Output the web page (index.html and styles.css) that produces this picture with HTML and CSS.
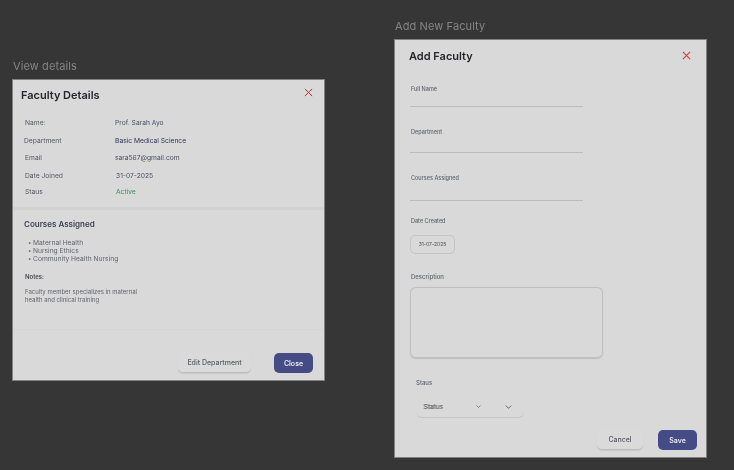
FILE: index.html
```html
<!DOCTYPE html>
<html lang="en">
<head>
<meta charset="utf-8">
<title>Faculty</title>
<link rel="stylesheet" href="styles.css">
</head>
<body>
<section class="frame frame-view">
  <h2 class="frame-label">View details</h2>
  <div class="card card-view">
    <header class="card-head head-view">
      <h1 class="card-title">Faculty Details</h1>
      <svg class="close close-view" viewBox="0 0 10 10"><path d="M1 1l8 8M9 1l-8 8"/></svg>
    </header>
    <div class="details">
      <div class="row row-1"><span class="key">Name:</span><span class="val">Prof. Sarah Ayo</span></div>
      <div class="row row-2"><span class="key key-out">Department</span><span class="val val-strong">Basic Medical Science</span></div>
      <div class="row row-3"><span class="key">Email</span><span class="val">sara567@gmail.com</span></div>
      <div class="row row-4"><span class="key">Date Joined</span><span class="val val-in">31-07-2025</span></div>
      <div class="row row-5"><span class="key">Staus</span><span class="val val-in val-active">Active</span></div>
    </div>
    <div class="courses">
      <h3 class="courses-title">Courses Assigned</h3>
      <ul class="course-list">
        <li>Maternal Health</li>
        <li>Nursing Ethics</li>
        <li>Community Health Nursing</li>
      </ul>
      <h4 class="notes-title">Notes:</h4>
      <p class="notes">Faculty member specializes in maternal<br>health and clinical training</p>
    </div>
    <footer class="actions actions-view">
      <button class="btn btn-light btn-edit">Edit Department</button>
      <button class="btn btn-primary btn-close">Close</button>
    </footer>
  </div>
</section>

<section class="frame frame-add">
  <h2 class="frame-label">Add New Faculty</h2>
  <div class="card card-add">
    <header class="card-head head-add">
      <h1 class="card-title">Add Faculty</h1>
      <svg class="close close-add" viewBox="0 0 10 10"><path d="M1 1l8 8M9 1l-8 8"/></svg>
    </header>
    <div class="field field-name"><label class="field-label">Full Name</label><div class="line line-name"></div></div>
    <div class="field field-dept"><label class="field-label">Department</label><div class="line line-dept"></div></div>
    <div class="field field-courses"><label class="field-label">Courses Assigned</label><div class="line line-courses"></div></div>
    <div class="field field-date"><label class="field-label">Date Created</label><div class="date-box">31-07-2025</div></div>
    <div class="field field-desc"><label class="field-label label-desc">Description</label><div class="textarea"></div></div>
    <div class="status">
      <label class="field-label status-label">Staus</label>
      <div class="select">
        <span class="select-text">Status<span class="select-ghost">Status</span></span>
        <svg class="chev chev-small" viewBox="0 0 10 6"><path d="M1 1l4 4 4-4"/></svg>
        <svg class="chev chev-large" viewBox="0 0 10 6"><path d="M1 1l4 4 4-4"/></svg>
      </div>
    </div>
    <footer class="actions actions-add">
      <button class="btn btn-light btn-cancel">Cancel</button>
      <button class="btn btn-primary btn-save">Save</button>
    </footer>
  </div>
</section>
</body>
</html>
```

FILE: styles.css
```css
* { box-sizing: border-box; margin: 0; padding: 0; }
html, body { width: 734px; height: 470px; overflow: hidden; }
body { background: #363636; font-family: Inter, "Noto Sans", sans-serif; color: #2a2d3a; position: relative; }

.frame { position: absolute; width: 313px; filter: blur(0.3px); }
.frame-view { left: 12px; top: 59px; }
.frame-add { left: 394px; top: 19px; }
.frame-label { font-size: 11px; line-height: 15px; font-weight: 400; color: #858585; height: 20px; padding-left: 1px; letter-spacing: 0.1px; }

.card { background: #d9d9d9; border: 1px solid #828282; display: flex; flex-direction: column; }
.card-view { height: 302px; }
.card-add { height: 419px; }

.card-head { display: flex; justify-content: space-between; align-items: flex-start; }
.head-view { padding: 8px 11px 0 8px; height: 30px; }
.head-add { padding: 9px 15px 0 14px; height: 39px; }
.card-title { font-size: 11px; line-height: 14px; font-weight: 600; color: #26262b; }
.close { fill: none; stroke: #d6242a; stroke-width: 1.1; }
.close-view { width: 9px; height: 9px; margin-top: 0; }
.close-add { width: 9px; height: 9px; stroke: #cf4444; stroke-width: 1.3; margin-top: 2px; }

.details { padding: 8px 0 0 11px; height: 100px; display: flex; flex-direction: column; border-bottom: 3px solid #d2d2d2; flex: none; }
.row { display: grid; grid-template-columns: 91px 1fr; font-size: 6.7px; line-height: 10px; color: #4a4d62; }
.row-2, .row-3, .row-4 { margin-top: 7.5px; }
.row-5 { margin-top: 6px; }
.key { color: #55575f; }
.row-1 .key, .row-3 .key, .row-4 .key, .row-5 .key { padding-left: 1px; }
.val-strong { color: #2f3356; }
.val-in { padding-left: 1px; }
.val-active { color: #3c8a5e; }

.courses { padding: 9px 0 0 11px; height: 120px; border-bottom: 1px solid #d5d5d5; flex: none; }
.courses-title { font-size: 8px; line-height: 11px; font-weight: 600; color: #3f4251; }
.course-list { list-style: none; margin-top: 9px; padding-left: 4px; font-size: 6.7px; line-height: 8px; color: #62646f; }
.course-list li::before { content: "•"; display: inline-block; width: 5px; font-size: 6px; }
.notes-title { margin-top: 10px; padding-left: 1px; font-size: 6px; line-height: 8px; font-weight: 600; color: #45474f; }
.notes { margin-top: 7px; padding-left: 1px; font-size: 6px; line-height: 7.5px; color: #62646f; }

.actions { display: flex; align-items: center; justify-content: flex-end; }
.actions-view { padding: 23px 11px 0 0; gap: 23px; }
.actions-add { padding: 12px 9px 0 0; gap: 15px; }
.btn { font-family: inherit; font-size: 7px; font-weight: 500; border: 0; border-radius: 5px; height: 20px; }
.btn-light { background: #dadada; color: #5a5c66; border-bottom: 1px solid #bdbdbd; box-shadow: 0 1px 1px #c8c8c8; }
.btn-primary { background: #454b85; color: #e8e8ef; font-weight: 600; }
.btn-edit { width: 73px; }
.btn-close { width: 39px; }
.btn-cancel { width: 46px; }
.btn-save { width: 39px; }

.field { padding-left: 15px; flex: none; }
.field-label { display: block; font-size: 5.5px; line-height: 8px; font-weight: 500; color: #60636f; padding-left: 1px; }
.line { height: 1px; background: #bcbcbc; width: 173px; }
.field-name { margin-top: 6px; }
.line-name { margin-top: 13px; }
.field-dept { margin-top: 21px; }
.line-dept { margin-top: 16px; }
.field-courses { margin-top: 21px; }
.line-courses { margin-top: 18px; }
.field-date { margin-top: 16px; }
.date-box { margin-top: 10px; width: 45px; height: 19px; border: 1px solid #c4c4c4; border-radius: 5px; font-size: 5px; line-height: 17px; text-align: center; color: #4b4d58; }
.field-desc { margin-top: 18px; }
.label-desc { font-size: 6px; padding-top: 1px; }
.textarea { margin-top: 6px; width: 193px; height: 72px; border: 1px solid #c0c0c0; border-bottom-width: 2px; border-radius: 6px; box-shadow: 0 0 1px #bdbdbd; }

.status { padding-left: 21px; margin-top: 20px; flex: none; }
.status-label { padding-left: 0; font-size: 6px; }
.select { margin-top: 9px; width: 108px; height: 22px; border-bottom: 1px solid #c6c6c6; border-radius: 0 0 6px 6px; display: flex; align-items: center; padding-left: 8px; font-size: 6.5px; color: #686a75; }
.select-text { position: relative; width: 52px; }
.select-ghost { position: absolute; left: -1px; top: 0; color: #55575f; opacity: .6; }
.chev { fill: none; stroke: #3c3e47; stroke-width: 1.1; }
.chev-small { width: 5px; height: 3px; }
.chev-large { width: 7px; height: 4px; margin-left: 24px; }
```
